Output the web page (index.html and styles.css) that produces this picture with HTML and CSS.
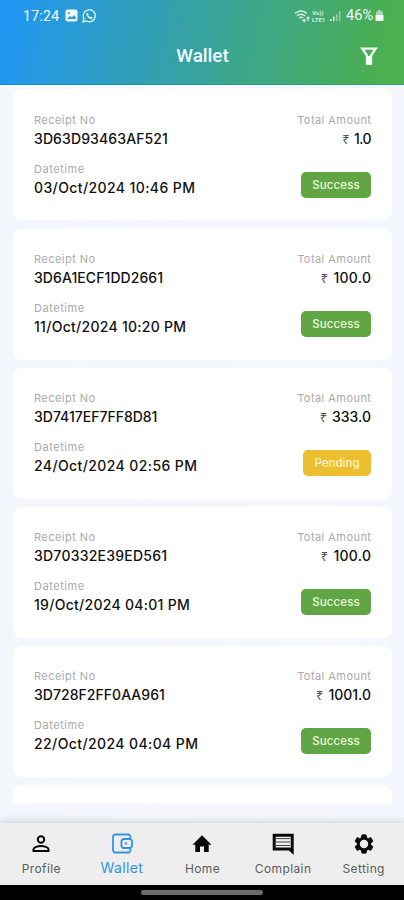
FILE: index.html
```html
<!DOCTYPE html>
<html lang="en">
<head>
<meta charset="utf-8">
<meta name="viewport" content="width=device-width, initial-scale=1">
<title>Wallet</title>
<link rel="stylesheet" href="styles.css">
</head>
<body>
<div class="screen">
  <header class="top">
    <div class="status">
      <div class="status-left">
        <span class="clock">17:24</span>
        <svg width="13" height="13" viewBox="0 0 13 13"><rect x=".5" y=".5" width="12" height="12" rx="2" fill="#f1faff"/><circle cx="4" cy="4" r="1" fill="#2699d8"/><path d="M2 10l3-3 2 1.5L9 6l2.5 4z" fill="#2699d8"/></svg>
        <svg width="15" height="14" viewBox="0 0 15 14"><path d="M1 13l1-3.5A6 6 0 1 1 4.5 12z" fill="none" stroke="#e4f7fa" stroke-width="1.3"/><path d="M5 3.7c-1.5 1.5.2 4 1.7 5.2 1.8 1.4 3.5 1.3 4-.2L9 7.4l-1 .9-2-2 .7-1z" fill="#e4f7fa"/></svg>
      </div>
      <div class="status-right">
        <svg width="17" height="14" viewBox="0 0 17 14" fill="none" stroke="#def5e7" stroke-width="1.5"><path d="M1 4.500q6-5 12 0M3 6.800q4-3.200 8 0M5 9q2-1.600 4 0"/><path d="M8 11.500h4M10.200 9.500v4M14 12V8M12.700 9.400L14 8l1.400 1.400" stroke-width="1.200"/></svg>
        <span class="volte"><span>Vo))</span><span>LTE1</span></span>
        <svg width="12" height="12" viewBox="0 0 12 12" fill="#d0f0d7"><path d="M1 9h1.600v2H1zM4 6.500h1.600V11H4z"/><path d="M7 4h1.500v7H7zM10 1h1.500v10H10z" opacity=".55"/></svg>
        <span class="percent">46%</span>
        <svg width="9" height="13" viewBox="0 0 9 13"><path d="M3 1h3v1.500h2V7H1V2.500h2z" fill="#a7dbab"/><path d="M.5 6h8v5a1 1 0 0 1-1 1h-6a1 1 0 0 1-1-1z" fill="#f5fff5"/></svg>
      </div>
    </div>
    <div class="bar">
      <h1>Wallet</h1>
      <svg class="filter" width="18" height="19" viewBox="0 0 18 19"><path d="M2.300 1.700h13.400L11 8.500v8H7v-8z" fill="none" stroke="#f6fff7" stroke-width="2.300"/><path d="M7 9h4v8.500H7z" fill="#f6fff7"/></svg>
    </div>
  </header>
  <main class="list">
    <article class="card">
      <div class="col"><span class="label">Receipt No</span><span class="value r1">3D63D93463AF521</span><span class="label date">Datetime</span><span class="value when">03/Oct/2024 10:46 PM</span></div>
      <div class="col end"><span class="label total">Total Amount</span><span class="value amount tight"><i>₹</i>1.0</span><span class="badge">Success</span></div>
    </article>
    <article class="card">
      <div class="col"><span class="label">Receipt No</span><span class="value r2">3D6A1ECF1DD2661</span><span class="label date">Datetime</span><span class="value when narrow">11/Oct/2024 10:20 PM</span></div>
      <div class="col end"><span class="label total">Total Amount</span><span class="value amount wide"><i>₹</i>100.0</span><span class="badge">Success</span></div>
    </article>
    <article class="card">
      <div class="col"><span class="label">Receipt No</span><span class="value r3">3D7417EF7FF8D81</span><span class="label date">Datetime</span><span class="value when">24/Oct/2024 02:56 PM</span></div>
      <div class="col end"><span class="label total">Total Amount</span><span class="value amount"><i>₹</i>333.0</span><span class="badge pending">Pending</span></div>
    </article>
    <article class="card">
      <div class="col"><span class="label">Receipt No</span><span class="value r4">3D70332E39ED561</span><span class="label date">Datetime</span><span class="value when narrow">19/Oct/2024 04:01 PM</span></div>
      <div class="col end"><span class="label total">Total Amount</span><span class="value amount wide"><i>₹</i>100.0</span><span class="badge">Success</span></div>
    </article>
    <article class="card">
      <div class="col"><span class="label">Receipt No</span><span class="value r5">3D728F2FF0AA961</span><span class="label date">Datetime</span><span class="value when">22/Oct/2024 04:04 PM</span></div>
      <div class="col end"><span class="label total">Total Amount</span><span class="value amount"><i>₹</i>1001.0</span><span class="badge">Success</span></div>
    </article>
    <div class="card partial"></div>
  </main>
  <nav class="tabs">
    <a class="tab"><svg viewBox="0 0 22 22"><circle cx="11" cy="6.500" r="3.200" fill="none" stroke="currentColor" stroke-width="2"/><path d="M3.500 18v-1.700c0-2 4.300-3.300 7.500-3.300s7.500 1.300 7.500 3.300V18z" fill="none" stroke="currentColor" stroke-width="2"/></svg><span>Profile</span></a>
    <a class="tab active"><svg viewBox="0 0 22 22" fill="none" stroke="currentColor" stroke-width="1.800"><path d="M19.300 6V3L18 1.500H3.500L2 3v15l1.500 1.500H18l1.300-1.500v-3"/><path d="M12 6h7.500l1.500 1.500v6L19.500 15H12l-1.500-1.500v-6z"/><circle cx="15" cy="10.500" r=".8" fill="currentColor" stroke-width="1"/></svg><span>Wallet</span></a>
    <a class="tab"><svg viewBox="0 0 22 22"><path d="M9 19v-5.500h4V19h4.700v-7.300h2.800L11 2.200 1.500 11.700h2.800V19z" fill="currentColor"/></svg><span>Home</span></a>
    <a class="tab"><svg viewBox="0 0 22 22"><path d="M2.200 2.200h18v16.300L17.500 16H2.200z" fill="none" stroke="currentColor" stroke-width="3"/><path d="M4 5.600h14M4 9h14M4 12.500h14" stroke="currentColor" stroke-width="1" opacity=".75"/></svg><span>Complain</span></a>
    <a class="tab"><svg viewBox="0 0 24 24"><path d="M19.430 12.980c.04-.32.070-.64.070-.98s-.03-.66-.07-.98l2.110-1.650c.19-.15.240-.42.120-.64l-2-3.460c-.12-.22-.39-.3-.61-.22l-2.490 1c-.52-.4-1.080-.73-1.690-.98l-.38-2.650A.49.49 0 0 0 14 2h-4c-.25 0-.46.180-.49.420l-.38 2.650c-.61.250-1.170.590-1.690.980l-2.490-1c-.23-.09-.49 0-.61.220l-2 3.460c-.13.220-.07.490.120.640l2.110 1.650c-.04.320-.07.650-.07.980s.03.660.070.980l-2.110 1.650c-.19.150-.24.420-.12.640l2 3.460c.12.220.39.300.61.220l2.490-1c.52.400 1.080.730 1.690.980l.38 2.650c.03.240.240.420.490.420h4c.25 0 .46-.18.490-.42l.38-2.650c.61-.25 1.170-.59 1.690-.98l2.490 1c.23.090.490 0 .61-.22l2-3.460c.12-.22.070-.49-.12-.64z" fill="currentColor" stroke="currentColor" stroke-width=".8"/><circle cx="12" cy="12" r="4.600" fill="#eee"/></svg><span>Setting</span></a>
  </nav>
  <div class="system"><div class="handle"></div></div>
</div>
</body>
</html>
```
FILE: styles.css
```css
* { box-sizing: border-box; }
body { margin: 0; font-family: Inter, "Liberation Sans", sans-serif; }
.screen { width: 404px; height: 900px; display: flex; flex-direction: column; overflow: hidden; background: #f4f6fe; }
.top { flex: 0 0 85px; background: linear-gradient(102deg, #2196f3 2%, #4caf50 94%); box-shadow: inset 0 -1px 0 rgba(0, 140, 160, .45); color: #f0fbff; font-family: Roboto, sans-serif; }
.status { height: 31px; padding: 0 20px 0 23px; display: flex; align-items: center; justify-content: space-between; }
.status-left, .status-right { display: flex; align-items: center; }
.status-left { gap: 4px; }
.clock { font-size: 14px; letter-spacing: .3px; width: 38px; }
.status-right { gap: 1px; }
.volte { display: flex; flex-direction: column; width: 16px; font-size: 6px; font-weight: 700; line-height: 7px; color: #d3f0df; }
.percent { font-size: 14.500px; margin: 0 1px 0 4px; }
.bar { height: 50px; display: grid; grid-template-columns: 1fr auto 1fr; align-items: center; padding: 0 26px 0 27px; }
h1 { grid-column: 2; margin: 0; font-size: 19px; line-height: 24px; font-weight: 500; letter-spacing: -.1px; }
.filter { justify-self: end; }
.list { flex: 1; min-height: 0; overflow: hidden; display: flex; flex-direction: column; gap: 8.100px; padding: 4.450px 12px 0 13px; background: linear-gradient(90deg, #f4f6fe, #f6f7fd 70%, #f3f7fd); }
.card { flex: 0 0 131px; background: #fff; border-radius: 9px; padding: 22.300px 21px 0; display: flex; justify-content: space-between; box-shadow: 0 0 2px #fafbff; }
.card.partial { flex-basis: 18px; border-radius: 9px 9px 0 0; padding: 0; }
.col { display: flex; flex-direction: column; align-items: flex-start; white-space: nowrap; }
.col.end { align-items: flex-end; }
.label { font-size: 11px; line-height: 16px; color: #aaa; letter-spacing: .45px; }
.value { font-size: 14px; line-height: 22px; font-weight: 500; color: #111; }
.r1 { letter-spacing: .12px; }
.r2 { letter-spacing: .08px; }
.r4 { letter-spacing: .24px; }
.r5 { letter-spacing: .04px; }
.when { letter-spacing: .4px; }
.when.narrow { letter-spacing: .28px; }
.date { margin-top: 11px; letter-spacing: .55px; }
.total { letter-spacing: .45px; margin-right: -.4px; }
.amount i { font: 13px "Noto Sans", sans-serif; color: #555; margin-right: 5px; }
.amount.tight { letter-spacing: -.6px; }
.amount.wide { letter-spacing: .3px; margin-right: -.3px; }
.badge { margin-top: 22.200px; width: 70px; height: 26px; border-radius: 5px; background: #60a644; color: #eafbdc; font-size: 11.500px; line-height: 26px; text-align: center; font-weight: 500; letter-spacing: .1px; }
.badge.pending { width: 68px; background: #ebbf30; color: #fff3c9; letter-spacing: 0; }
.tabs { flex: 0 0 62px; padding-left: 1px; background: #eee; box-shadow: 0 -1px 8px #c8cad4; display: grid; grid-template-columns: repeat(5, 1fr); position: relative; }
.tab { display: flex; flex-direction: column; align-items: center; padding-top: 10px; color: #080808; }
.tab svg { width: 22px; height: 22px; }
.tab span { font-size: 12px; line-height: 18px; margin-top: 5px; color: #5c5c5c; letter-spacing: .4px; }
.tab.active { color: #3293e4; }
.tab.active span { font-size: 14px; margin-top: 4px; color: #3293e4; }
.system { position: relative; flex: 0 0 15px; background: #000; display: flex; justify-content: center; padding-top: 5px; }
.handle { width: 122px; height: 5px; border-radius: 3px; background: #6b6b6b; }
```
